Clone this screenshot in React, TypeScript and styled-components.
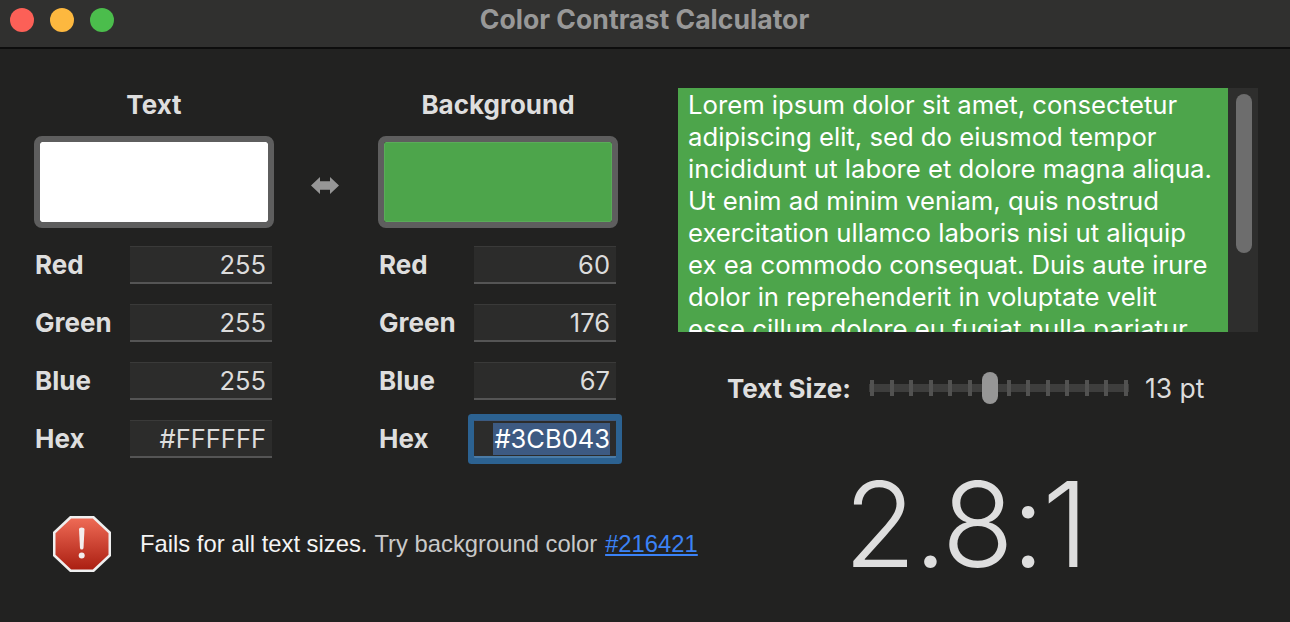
import React from "react";
import styled, { createGlobalStyle } from "styled-components";

const Global = createGlobalStyle`
  html, body { margin: 0; padding: 0; background: #222221; overflow: hidden; }
  * { box-sizing: border-box; }
`;
const Window = styled.div`
  width: 1290px; height: 622px; background: #222221; overflow: hidden;
  font-family: Inter, "Liberation Sans", sans-serif; color: #dedede;
`;
const TitleBar = styled.header`
  height: 49px; position: relative; display: flex; align-items: center; justify-content: center;
  background: #30302f; border-bottom: 2px solid #0d0d0d;
`;
const Lights = styled.div`
  position: absolute; left: 10px; top: 8px; display: flex; gap: 16px;
`;
const Light = styled.span<{ $c: string }>`
  width: 24px; height: 24px; border-radius: 50%; background: ${p => p.$c};
`;
const Title = styled.h1`
  margin: 0; font-size: 26.6px; font-weight: 700; color: #989898; line-height: 40px; padding-bottom: 10px; padding-right: 1px;
`;
const Content = styled.main`
  display: grid; grid-template-columns: 644px 580px; padding: 39px 0 0 34px;
`;
const Editors = styled.section`
  display: flex; align-items: flex-start;
`;
const Column = styled.div`
  width: 240px; display: flex; flex-direction: column;
`;
const Heading = styled.h2`
  margin: 0 0 14px; height: 34px; line-height: 34px; text-align: center; font-size: 26px; font-weight: 700; color: #dedede;
`;
const Swatch = styled.div<{ $c: string }>`
  height: 92px; border: 6px solid #5e5e5e; border-radius: 8px; background: ${p => p.$c}; margin-bottom: 18px;
  background-clip: padding-box; box-shadow: inset 0 0 0 1px rgba(255, 255, 255, 0.08);
`;
const Fields = styled.div`
  display: flex; flex-direction: column; gap: 20px;
`;
const Row = styled.label`
  display: flex; align-items: center; height: 38px; font-size: 26px; font-weight: 700; color: #dedede;
`;
const RowLabel = styled.span`
  width: 96px; padding: 0 0 2px 1px;
`;
const Field = styled.div<{ $focus?: boolean }>`
  width: 142px; height: 38px; background: #2c2c2b; display: flex; align-items: center; justify-content: flex-end;
  padding-right: 6px; font-size: 25.5px; font-weight: 400; color: #dcdcdc;
  border-top: 1px solid #3a3a39; border-bottom: 2px solid #555;
  ${p => p.$focus && "box-shadow: 0 0 0 6px #2c6291; border-radius: 1px; color: #fff; border-bottom-color: #4a7ba6; border-top-color:#3c5a80;"}
`;
const Selected = styled.span`
  background: #3d5a82; line-height: 32px; height: 32px; padding: 0 0 0 1px;
`;
const SwapSlot = styled.div`
  width: 104px; height: 92px; margin-top: 48px; display: flex; align-items: center; justify-content: center; padding: 7px 2px 0 0;
`;
const Right = styled.section`
  display: flex; flex-direction: column;
`;
const Preview = styled.div`
  height: 244px; width: 580px; display: flex; background: #2e2e2d;
`;
const PreviewText = styled.div<{ $bg: string }>`
  width: 550px; height: 244px; overflow: hidden; background: ${p => p.$bg}; color: #fff;
  padding: 1px 12px 0 10px; font-size: 25.7px; line-height: 32px;
`;
const ScrollGutter = styled.div`
  width: 30px; padding: 6px 0 0 8px;
`;
const ScrollThumb = styled.div`
  width: 16px; height: 159px; border-radius: 8px; background: #6d6d6d;
`;
const SizeRow = styled.div`
  display: flex; align-items: center; height: 32px; margin-top: 40px; padding-left: 49px;
`;
const SizeLabel = styled.span`
  font-size: 26px; font-weight: 700; width: 142px; color: #dedede; white-space: nowrap;
`;
const Slider = styled.div`
  position: relative; width: 260px; height: 16px; display: flex; justify-content: space-between; padding: 0 1px;
  &::before { content: ""; position: absolute; left: 0; right: 0; top: 4px; height: 8px; background: #3e3e3d; }
`;
const Tick = styled.span`
  position: relative; width: 4px; height: 16px; background: #525251;
`;
const Knob = styled.span`
  position: absolute; left: 113px; top: -8px; width: 16px; height: 32px; border-radius: 8px; background: #969696;
`;
const SizeValue = styled.span`
  margin-left: 16px; font-size: 26.5px; color: #dcdcdc;
`;
const Message = styled.div`
  display: flex; align-items: center; padding-left: 19px; margin-top: 58px; height: 56px; white-space: nowrap;
  font-family: "Liberation Sans", Arial, sans-serif; font-size: 23.8px; color: #c9c9c9;
`;
const IconSlot = styled.div`
  flex: none; width: 87px; height: 56px; line-height: 0;
`;
const Strong = styled.span`
  color: #f4f4f4; margin-right: 7px;
`;
const Link = styled.a`
  color: #3b82f6; text-decoration: underline; margin-left: 8px;
`;
const Ratio = styled.div`
  margin-top: 7px; height: 118px; line-height: 118px; text-align: center; letter-spacing: -2.5px; padding-right: 6px;
  font-size: 118px; font-weight: 300; color: #dedede; font-family: Inter, sans-serif;
`;

const fields = (vals: string[], focus?: boolean) => ["Red", "Green", "Blue", "Hex"].map((l, i) => (
  <Row key={l}>
    <RowLabel>{l}</RowLabel>
    {focus && i === 3
      ? <Field $focus><Selected>{vals[i]}</Selected></Field>
      : <Field>{vals[i]}</Field>}
  </Row>
));

const ticks = Array.from({ length: 14 }, (_, i) => i);

export default function App() {
  return (
    <Window>
      <Global />
      <TitleBar>
        <Lights>
          <Light $c="#fc6057" /><Light $c="#fdb83f" /><Light $c="#4bbd4c" />
        </Lights>
        <Title>Color Contrast Calculator</Title>
      </TitleBar>
      <Content>
        <Editors>
          <Column>
            <Heading>Text</Heading>
            <Swatch $c="#ffffff" />
            <Fields>{fields(["255", "255", "255", "#FFFFFF"])}</Fields>
          </Column>
          <SwapSlot>
            <svg width="28" height="17" viewBox="0 0 28 17">
              <path d="M0 8.5 L9 0 V4.3 H19 V0 L28 8.5 L19 17 V12.7 H9 V17 Z" fill="#969696" />
            </svg>
          </SwapSlot>
          <Column>
            <Heading>Background</Heading>
            <Swatch $c="#4da54b" />
            <Fields>{fields(["60", "176", "67", "#3CB043"], true)}</Fields>
          </Column>
        </Editors>
        <Right>
          <Preview>
            <PreviewText $bg="#4da54b">
              Lorem ipsum dolor sit amet, consectetur adipiscing elit, sed do eiusmod tempor incididunt ut labore et dolore magna aliqua. Ut enim ad minim veniam, quis nostrud exercitation ullamco laboris nisi ut aliquip ex ea commodo consequat. Duis aute irure dolor in reprehenderit in voluptate velit esse cillum dolore eu fugiat nulla pariatur.
            </PreviewText>
            <ScrollGutter><ScrollThumb /></ScrollGutter>
          </Preview>
          <SizeRow>
            <SizeLabel>Text Size:</SizeLabel>
            <Slider>
              {ticks.map(i => <Tick key={i} />)}
              <Knob />
            </Slider>
            <SizeValue>13 pt</SizeValue>
          </SizeRow>
        </Right>
        <Message>
          <IconSlot>
            <svg width="58" height="56" viewBox="0 0 58 56">
              <defs>
                <linearGradient id="alertFill" x1="0" y1="0" x2="0" y2="1">
                  <stop offset="0" stopColor="#ee6a55" />
                  <stop offset="1" stopColor="#ab1f12" />
                </linearGradient>
              </defs>
              <polygon points="17,0 41,0 58,16 58,40 41,56 17,56 0,40 0,16" fill="#efefef" />
              <polygon points="18.2,2.5 39.8,2.5 55.5,17.2 55.5,38.8 39.8,53.5 18.2,53.5 2.5,38.8 2.5,17.2" fill="url(#alertFill)" />
              <path d="M26 13 Q26 11.5 28.7 11.5 Q31.5 11.5 31.5 13 L30.5 32 Q30.3 33.5 28.7 33.5 Q27.2 33.5 27 32 Z" fill="#f3eeee" />
              <circle cx="28.7" cy="39.5" r="3" fill="#f3eeee" />
            </svg>
          </IconSlot>
          <span><Strong>Fails for all text sizes.</Strong>Try background color<Link>#216421</Link></span>
        </Message>
        <Ratio>2.8:1</Ratio>
      </Content>
    </Window>
  );
}
